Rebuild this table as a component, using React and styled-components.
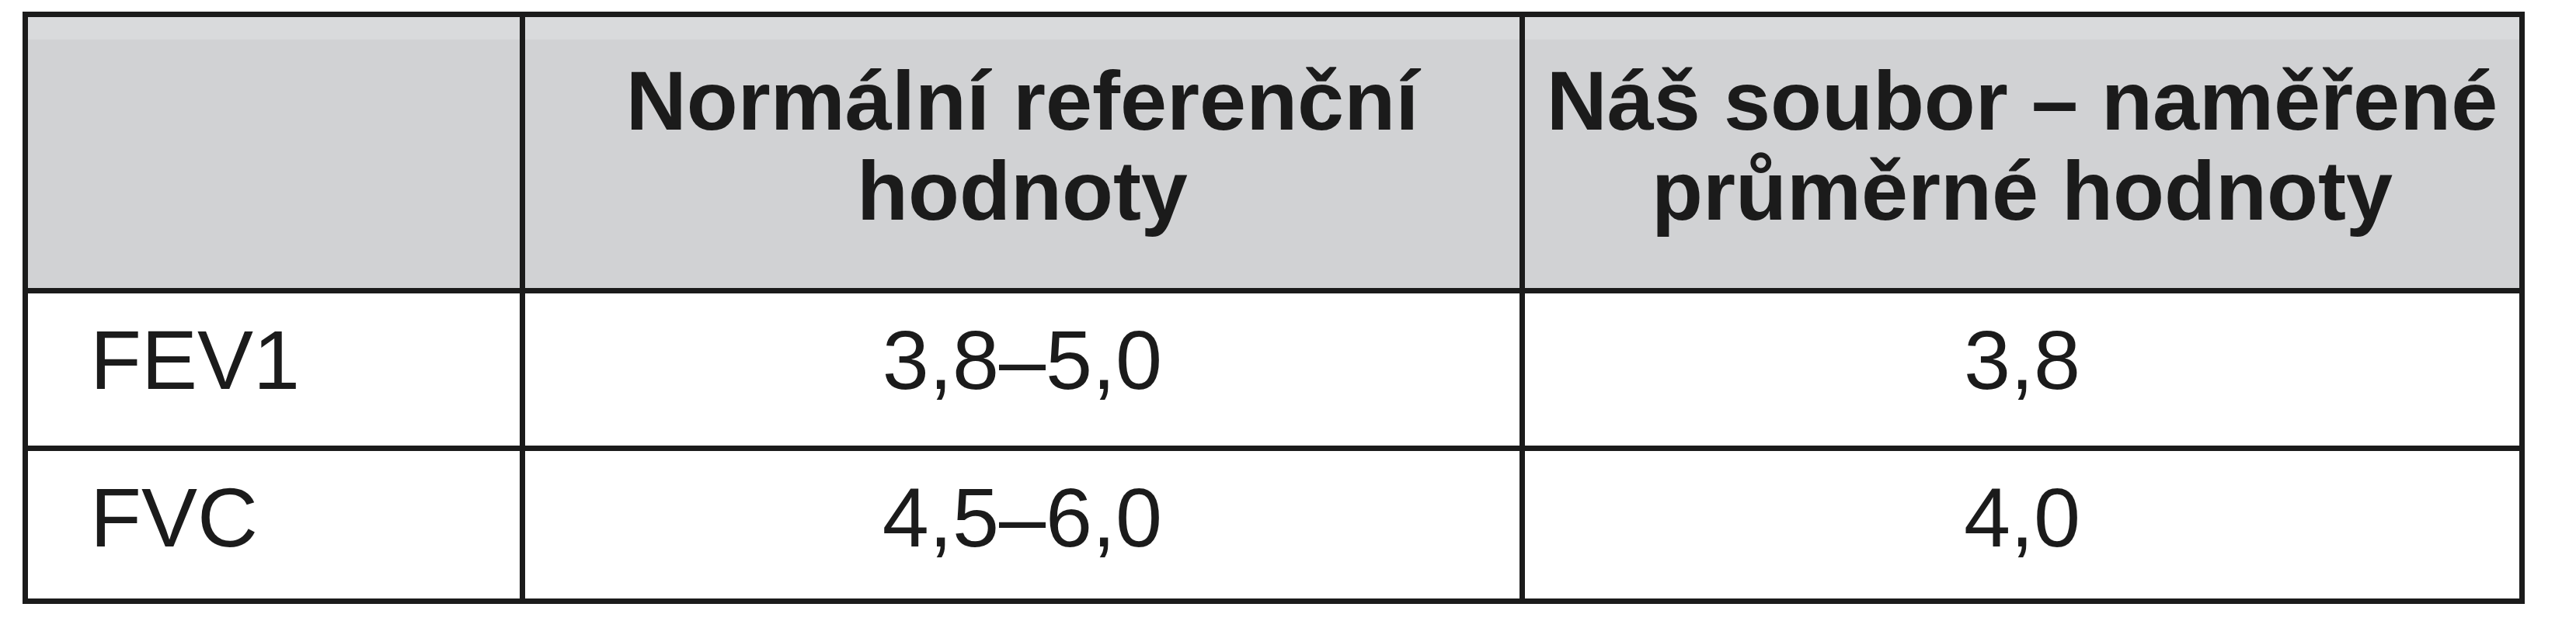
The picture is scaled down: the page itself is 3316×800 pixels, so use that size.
import React from 'react';
import styled, { createGlobalStyle } from 'styled-components';

const ink = '#1b1b1b';
const headGrey = '#d1d2d4';

const GlobalStyle = createGlobalStyle`
  html, body {
    margin: 0;
    padding: 0;
    background: #ffffff;
  }
  body {
    font-family: "Liberation Sans", Arial, Helvetica, sans-serif;
    color: ${ink};
  }
`;

const Page = styled.div`
  padding: 15px 0 0 29px;
`;

const Table = styled.table`
  border-collapse: separate;
  border-spacing: 0;
  width: 3221px;
  table-layout: fixed;
  border-top: 7px solid ${ink};
  border-left: 7px solid ${ink};
`;

const Col = styled.col`
  width: ${(props) => props.w}px;
`;

const HeadCell = styled.th`
  box-sizing: border-box;
  height: 356px;
  padding: 0 0 17px 0;
  background: linear-gradient(
    to bottom,
    #d9dadc 0px,
    #d9dadc 28px,
    ${headGrey} 30px,
    ${headGrey} 100%
  );
  border-right: 7px solid ${ink};
  border-bottom: 7px solid ${ink};
  font-size: 108px;
  line-height: 116px;
  font-weight: 700;
  text-align: center;
  vertical-align: middle;
  white-space: nowrap;
`;

const Cell = styled.td`
  box-sizing: border-box;
  height: ${(props) => props.h}px;
  padding: 0 0 ${(props) => props.lift}px
    ${(props) => (props.label ? '80px' : '0')};
  border-right: 7px solid ${ink};
  border-bottom: 7px solid ${ink};
  font-size: 108px;
  line-height: 1.15;
  font-weight: 400;
  text-align: ${(props) => (props.label ? 'left' : 'center')};
  vertical-align: middle;
  white-space: nowrap;
`;

const rows = [
  { name: 'FEV1', ref: '3,8–5,0', ours: '3,8', h: 203, lift: 24 },
  { name: 'FVC', ref: '4,5–6,0', ours: '4,0', h: 197, lift: 17 },
];

export default function App() {
  return (
    <>
      <GlobalStyle />
      <Page>
        <Table>
          <colgroup>
            <Col w={640} />
            <Col w={1287} />
            <Col w={1287} />
          </colgroup>
          <thead>
            <tr>
              <HeadCell />
              <HeadCell>
                Normální referenční
                <br />
                hodnoty
              </HeadCell>
              <HeadCell>
                Náš soubor – naměřené
                <br />
                průměrné hodnoty
              </HeadCell>
            </tr>
          </thead>
          <tbody>
            {rows.map((row) => (
              <tr key={row.name}>
                <Cell label h={row.h} lift={row.lift}>
                  {row.name}
                </Cell>
                <Cell h={row.h} lift={row.lift}>
                  {row.ref}
                </Cell>
                <Cell h={row.h} lift={row.lift}>
                  {row.ours}
                </Cell>
              </tr>
            ))}
          </tbody>
        </Table>
      </Page>
    </>
  );
}
